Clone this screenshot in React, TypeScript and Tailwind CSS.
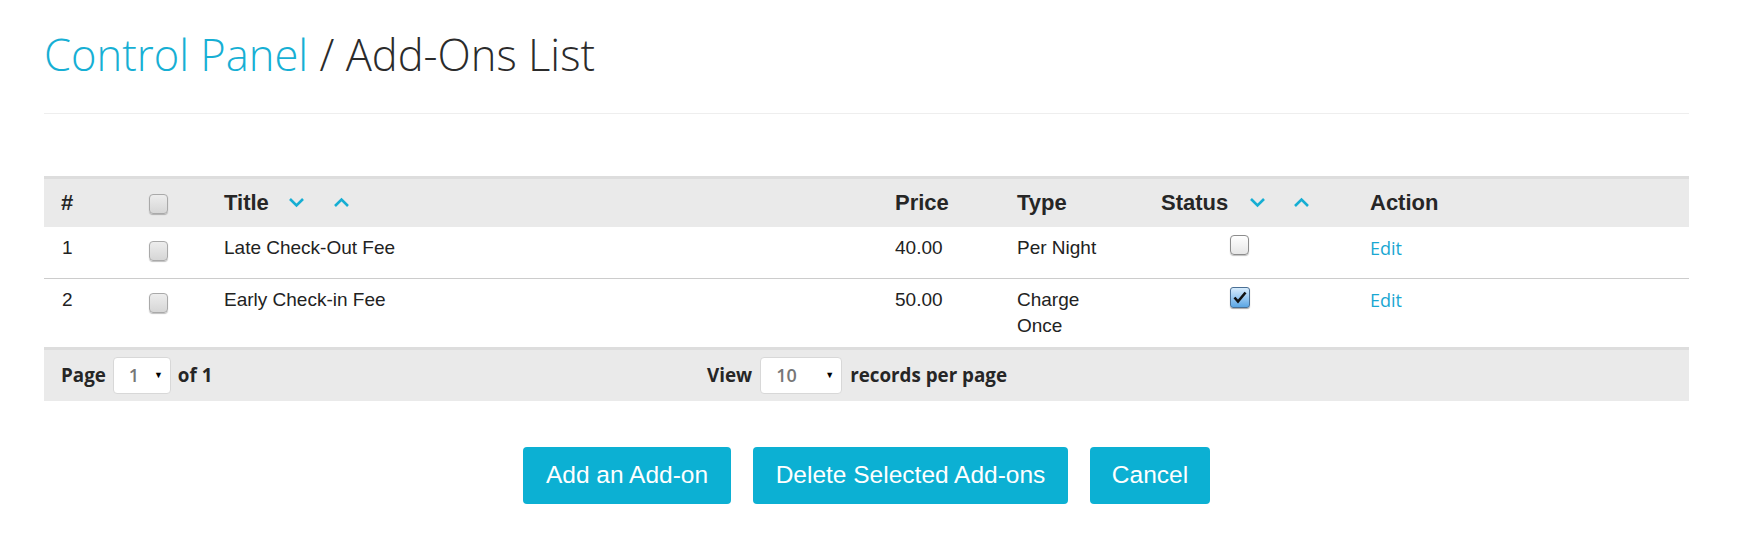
import React from 'react'

const sans = "font-['Liberation_Sans',Arial,sans-serif]"
const open = "font-['Open_Sans',sans-serif]"

function Chevron({ up }: { up?: boolean }) {
  return (
    <svg width="17" height="11" viewBox="0 0 17 11" className="text-[#16aed3]">
      <polyline
        points={up ? '2,9 8.5,2.5 15,9' : '2,2 8.5,8.5 15,2'}
        fill="none"
        stroke="currentColor"
        strokeWidth="2.6"
      />
    </svg>
  )
}

function Box({ kind }: { kind: 'gray' | 'white' | 'checked' }) {
  if (kind === 'checked') {
    return (
      <div className="w-[20px] h-[21px] rounded-[3px] border border-[#4a6f94] bg-gradient-to-b from-[#d7ecfd] to-[#5aa6e4] shadow-[0_1px_1px_rgba(0,0,0,0.35)] flex items-center justify-center">
        <svg width="14" height="13" viewBox="0 0 14 13">
          <path d="M1.5 6.5 L5 10.5 L12.5 1.5" fill="none" stroke="#111" strokeWidth="2.6" />
        </svg>
      </div>
    )
  }
  return (
    <div
      className={
        'w-[19px] h-[20px] rounded-[4px] border shadow-[0_1px_1px_rgba(0,0,0,0.25)] ' +
        (kind === 'gray'
          ? 'border-[#a9a9a9] bg-gradient-to-b from-[#ededed] to-[#d6d6d6]'
          : 'border-[#8c8c8c] bg-gradient-to-b from-[#ffffff] to-[#e6e6e6]')
      }
    />
  )
}

const cols = 'grid grid-cols-[105px_75px_671px_122px_144px_209px_1fr]'

const rows = [
  { n: '1', title: 'Late Check-Out Fee', price: '40.00', type: 'Per Night', on: false },
  { n: '2', title: 'Early Check-in Fee', price: '50.00', type: 'Charge Once', on: true },
]

function Select({ value, w }: { value: string; w: string }) {
  return (
    <div className={`${w} h-[37px] bg-white border border-[#d8d8d8] rounded-[4px] flex items-center justify-between pl-[15px] pr-[7px]`}>
      <span className="text-[#777] font-semibold text-[18px]">{value}</span>
      <span className="text-[9px] text-black">▼</span>
    </div>
  )
}

export default function App() {
  return (
    <div className="bg-white min-h-screen text-[#2b2b2b]">
      <div className="ml-[44px] w-[1645px]">
        <h1 className={`${open} font-light text-[43.5px] leading-none pt-[33px] pb-[36px] border-b border-[#eeeeee]`}>
          <span className="text-[#17afd4]">Control Panel</span> / Add-Ons List
        </h1>

        <div className={`${sans} mt-[62px]`}>
          <div className={`${cols} h-[51px] border-t-[3px] border-[#dddddd] bg-[#eaeaea] items-center font-bold text-[22px] text-[#262626]`}>
            <div className="pl-[17px]">#</div>
            <div className="pt-[2px]"><Box kind="gray" /></div>
            <div className="flex items-center">
              Title
              <span className="ml-[19px]"><Chevron /></span>
              <span className="ml-[28px]"><Chevron up /></span>
            </div>
            <div>Price</div>
            <div>Type</div>
            <div className="flex items-center">
              Status
              <span className="ml-[21px]"><Chevron /></span>
              <span className="ml-[27px]"><Chevron up /></span>
            </div>
            <div>Action</div>
          </div>

          {rows.map((r, i) => (
            <div
              key={r.n}
              className={`${cols} min-h-[52px] pt-[8px] pb-[8px] text-[19px] leading-[26px] text-[#222] ${i === 0 ? 'border-b border-[#cccccc]' : ''}`}
            >
              <div className="pl-[18px]">{r.n}</div>
              <div className="pt-[6px]"><Box kind="gray" /></div>
              <div>{r.title}</div>
              <div>{r.price}</div>
              <div className="w-[100px]">{r.type}</div>
              <div className="pl-[69px]"><Box kind={r.on ? 'checked' : 'white'} /></div>
              <div className={`${open} text-[18px] text-[#1aa7d2]`}>Edit</div>
            </div>
          ))}

          <div className={`${open} flex items-center h-[54px] border-t-[3px] border-[#dddddd] bg-[#eaeaea] font-bold text-[18.8px] text-[#262626]`}>
            <div className="w-[663px] pl-[17px] flex items-center gap-[7px]">
              <span>Page</span>
              <Select value="1" w="w-[58px]" />
              <span>of 1</span>
            </div>
            <div className="flex items-center gap-[8px]">
              <span>View</span>
              <Select value="10" w="w-[82px]" />
              <span>records per page</span>
            </div>
          </div>
        </div>

        <div className={`${sans} flex justify-center gap-[22px] mt-[46px] text-white text-[24.5px]`}>
          <button className="h-[57px] w-[208px] bg-[#0cb0d3] rounded-[4px]">Add an Add-on</button>
          <button className="h-[57px] w-[315px] bg-[#0cb0d3] rounded-[4px]">Delete Selected Add-ons</button>
          <button className="h-[57px] w-[120px] bg-[#0cb0d3] rounded-[4px]">Cancel</button>
        </div>
      </div>
    </div>
  )
}
